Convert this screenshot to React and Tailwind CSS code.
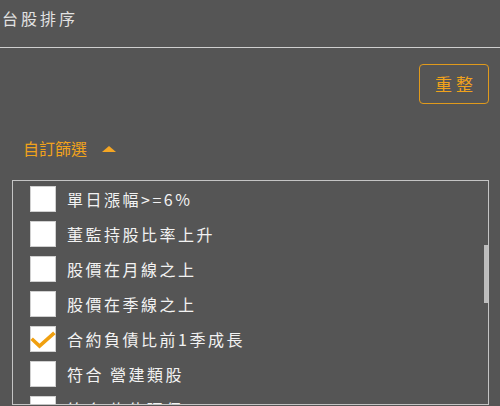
import React from "react";

const items = [
  { label: "單日漲幅>=6%", checked: false },
  { label: "董監持股比率上升", checked: false },
  { label: "股價在月線之上", checked: false },
  { label: "股價在季線之上", checked: false },
  { label: "合約負債比前1季成長", checked: true },
  { label: "符合 營建類股", checked: false },
  { label: "符合 綠能環保", checked: false },
];

export default function App() {
  return (
    <div className="w-[500px] h-[406px] bg-[#555555] overflow-hidden font-['Noto_Sans_CJK_TC','Noto_Sans',sans-serif]">
      <div className="h-[48px] border-b border-[#cfcfcf] pl-[2px] pt-[6px] text-[16px] leading-[24px] tracking-[3px] text-[#e2e2e2]">
        台股排序
      </div>
      <div className="flex justify-end pr-[11px] pt-[16px]">
        <button className="w-[70px] h-[40px] border border-[#e09a1c] rounded-[4px] text-[#f0a21c] text-[17px] leading-[20px] tracking-[4px] pl-[4px]">
          重整
        </button>
      </div>
      <div className="flex items-center h-[22px] mt-[33px] pl-[23px]">
        <span className="text-[16px] leading-[22px] text-[#f0a21c]">自訂篩選</span>
        <span className="ml-[15px] mt-[2px] w-0 h-0 border-l-[7px] border-r-[7px] border-b-[6px] border-l-transparent border-r-transparent border-b-[#f5a623]"></span>
      </div>
      <div className="relative mt-[21px] ml-[12px] w-[477px] h-[225px] border border-[#c4c4c4] overflow-hidden">
        <div className="flex flex-col gap-[9px] pt-[5px] pl-[17px]">
          {items.map((it) => (
            <div key={it.label} className="flex items-center h-[26px]">
              <div className="relative w-[26px] h-[26px] bg-white border border-[#d0d0d0] shrink-0">
                {it.checked && (
                  <svg className="absolute left-[0px] top-[6px] overflow-visible" width="24" height="16" viewBox="0 0 24 16">
                    <polyline points="2,7 8.5,13 22,1" fill="none" stroke="#f0a010" strokeWidth="3.6" strokeLinecap="square" strokeLinejoin="miter" />
                  </svg>
                )}
              </div>
              <span className="ml-[11px] text-[16px] leading-[22px] tracking-[2.5px] text-[#f2f2f2] whitespace-pre">
                {it.label}
              </span>
            </div>
          ))}
        </div>
        <div className="absolute right-0 top-[64px] w-[4px] h-[58px] bg-[#bdbdbd]"></div>
      </div>
    </div>
  );
}
